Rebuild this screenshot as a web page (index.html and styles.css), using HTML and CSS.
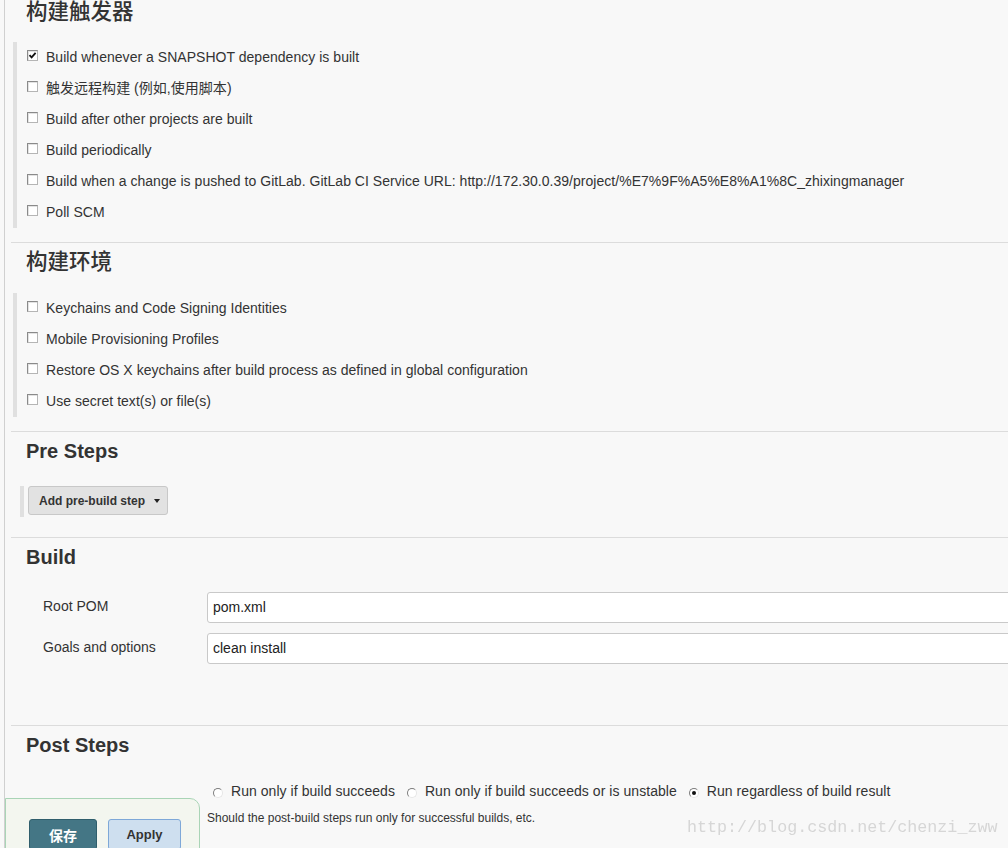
FILE: index.html
```html
<!DOCTYPE html>
<html lang="zh">
<head>
<meta charset="utf-8">
<title>Jenkins config</title>
<link rel="stylesheet" href="styles.css">
</head>
<body>
<div class="page">
  <section class="section first">
    <h2 class="cjk-heading">构建触发器</h2>
    <div class="group">
      <div class="opt"><span class="cb checked"><svg viewBox="0 0 9 9" width="9" height="9"><path d="M1.5 4.2 L3.6 6.4 L7.6 1.8" fill="none" stroke="#111" stroke-width="1.8"/></svg></span><span class="txt">Build whenever a SNAPSHOT dependency is built</span></div>
      <div class="opt"><span class="cb"></span><span class="txt">触发远程构建 (例如,使用脚本)</span></div>
      <div class="opt"><span class="cb"></span><span class="txt">Build after other projects are built</span></div>
      <div class="opt"><span class="cb"></span><span class="txt">Build periodically</span></div>
      <div class="opt"><span class="cb"></span><span class="txt">Build when a change is pushed to GitLab. GitLab CI Service URL: http://172.30.0.39/project/%E7%9F%A5%E8%A1%8C_zhixingmanager</span></div>
      <div class="opt"><span class="cb"></span><span class="txt">Poll SCM</span></div>
    </div>
  </section>

  <section class="section env">
    <h2 class="cjk-heading">构建环境</h2>
    <div class="group">
      <div class="opt"><span class="cb"></span><span class="txt">Keychains and Code Signing Identities</span></div>
      <div class="opt"><span class="cb"></span><span class="txt">Mobile Provisioning Profiles</span></div>
      <div class="opt"><span class="cb"></span><span class="txt">Restore OS X keychains after build process as defined in global configuration</span></div>
      <div class="opt"><span class="cb"></span><span class="txt">Use secret text(s) or file(s)</span></div>
    </div>
  </section>

  <section class="section pre">
    <h2 class="heading">Pre Steps</h2>
    <div class="btn-group">
      <button class="dropdown-btn">Add pre-build step <span class="caret"></span></button>
    </div>
  </section>

  <section class="section build">
    <h2 class="heading">Build</h2>
    <div class="form-row">
      <label class="label">Root POM</label>
      <div class="input">pom.xml</div>
    </div>
    <div class="form-row">
      <label class="label">Goals and options</label>
      <div class="input">clean install</div>
    </div>
  </section>

  <section class="section post">
    <h2 class="heading">Post Steps</h2>
    <div class="form-row radio-row">
      <span class="label"></span>
      <div class="radios">
        <span class="radio-item"><span class="radio"></span>Run only if build succeeds</span>
        <span class="radio-item"><span class="radio"></span>Run only if build succeeds or is unstable</span>
        <span class="radio-item"><span class="radio on"></span>Run regardless of build result</span>
      </div>
    </div>
    <div class="form-row">
      <span class="label"></span>
      <div class="help">Should the post-build steps run only for successful builds, etc.</div>
    </div>
  </section>
</div>

<div class="bottom-bar">
  <button class="btn-save">保存</button>
  <button class="btn-apply">Apply</button>
</div>

<div class="watermark">http://blog.csdn.net/chenzi_zww</div>
</body>
</html>
```

FILE: styles.css
```css
html, body {
  margin: 0;
  padding: 0;
  overflow: hidden;
  background: #f8f8f8;
}

body {
  font-family: "Liberation Sans", Arial, "Noto Sans CJK SC", sans-serif;
  font-size: 14px;
  color: #333;
  height: 848px;
}

.page {
  margin-left: 4px;
  border-left: 1px solid #d0d0d0;
  width: 1060px;
  min-height: 848px;
}

.section {
  margin-left: 6px;
  border-top: 1px solid #dcdcdc;
  padding-top: 7px;
}

.section.first {
  border-top: none;
  padding-top: 0;
  padding-bottom: 14px;
}

.section.env {
  padding-bottom: 14px;
}

.cjk-heading {
  margin: 0;
  padding-left: 15px;
  font-family: "Noto Sans CJK SC", sans-serif;
  font-size: 21.5px;
  font-weight: 500;
  line-height: 20px;
  height: 24px;
  color: #333;
}

.heading {
  margin: 0;
  padding-left: 15px;
  font-family: "Liberation Sans", Arial, sans-serif;
  font-size: 20px;
  font-weight: bold;
  line-height: 24px;
  color: #333;
}

.group {
  margin-top: 18px;
  margin-left: 2px;
  border-left: 4px solid #e0e0e0;
  padding-left: 10px;
}

.section.env .group {
  margin-top: 19px;
}

.opt {
  height: 31px;
  display: flex;
  align-items: center;
  gap: 8px;
  white-space: nowrap;
}

.txt {
  line-height: 16px;
  letter-spacing: 0.03px;
  position: relative;
  top: -1px;
}

.cb {
  width: 9px;
  height: 9px;
  border: 1px solid #8a8a8a;
  border-right-color: #b5b5b5;
  border-bottom-color: #b5b5b5;
  background: #fff;
  box-shadow: inset 1px 1px 0 #e3e3e3;
  flex: none;
  margin-bottom: 5px;
  display: flex;
  align-items: center;
  justify-content: center;
}

.cb svg {
  display: block;
}

.pre .btn-group {
  margin-top: 23px;
  margin-left: 9px;
  border-left: 4px solid #e0e0e0;
  padding-left: 4px;
  height: 31px;
  margin-bottom: 20px;
}

.dropdown-btn {
  height: 29px;
  width: 140px;
  padding: 0 0 0 10px;
  border: 1px solid #c8c8c8;
  border-radius: 3px;
  background: #e2e2e2;
  font-family: "Liberation Sans", Arial, sans-serif;
  font-size: 12px;
  font-weight: bold;
  color: #333;
  display: flex;
  align-items: center;
  gap: 9px;
  cursor: pointer;
}

.caret {
  width: 0;
  height: 0;
  border-left: 3.5px solid transparent;
  border-right: 3.5px solid transparent;
  border-top: 4px solid #222;
}

.build .form-row:first-of-type {
  margin-top: 23px;
}

.form-row {
  display: grid;
  grid-template-columns: 164px 1fr;
  padding-left: 32px;
}

.build .form-row + .form-row {
  margin-top: 10px;
}

.build {
  padding-bottom: 61px;
}

.label {
  font-size: 14px;
  line-height: 18px;
  padding-top: 5px;
  color: #333;
}

.input {
  height: 29px;
  border: 1px solid #c9c9c9;
  border-radius: 3px;
  background: #fff;
  padding-left: 5px;
  line-height: 29px;
  font-size: 14px;
  color: #222;
}

.radio-row {
  margin-top: 25px;
}

.radio-row .label,
.post .label {
  padding-top: 0;
}

.radios {
  display: flex;
  align-items: center;
  white-space: nowrap;
  line-height: 18px;
  padding-left: 6px;
  letter-spacing: 0.05px;
}

.radio-item {
  display: inline-flex;
  align-items: center;
  gap: 8px;
  margin-right: 12px;
}

.radio {
  width: 8px;
  height: 8px;
  border-radius: 50%;
  border: 1px solid;
  border-color: #7d7d7d #e6e6e6 #e6e6e6 #7d7d7d;
  background: #fff;
  position: relative;
  top: 2px;
  flex: none;
}

.radio.on::after {
  content: "";
  position: absolute;
  left: 2px;
  top: 2px;
  width: 4px;
  height: 4px;
  border-radius: 50%;
  background: #111;
}

.help {
  margin-top: 10px;
  font-size: 12px;
  line-height: 16px;
  color: #333;
}

.bottom-bar {
  position: fixed;
  left: 5px;
  top: 798px;
  width: 195px;
  height: 60px;
  box-sizing: border-box;
  background: #f3f6ef;
  border: 1px solid #a9d4b6;
  border-top-right-radius: 10px;
  padding: 20px 0 0 23px;
  display: flex;
  gap: 11px;
  align-items: flex-start;
}

.btn-save {
  width: 68px;
  height: 31px;
  background: #447685;
  border: 1px solid #2f5e6c;
  border-radius: 3px;
  color: #fff;
  font-family: "Noto Sans CJK SC", sans-serif;
  font-size: 14px;
  font-weight: bold;
  padding: 0;
}

.btn-apply {
  width: 73px;
  height: 31px;
  background: #cedfef;
  border: 1px solid #7ea8d8;
  border-radius: 3px;
  color: #333;
  font-family: "Liberation Sans", Arial, sans-serif;
  font-size: 13px;
  font-weight: bold;
  padding: 0;
}

.watermark {
  position: fixed;
  left: 687px;
  top: 817px;
  font-family: "Liberation Mono", "Courier New", monospace;
  font-size: 16.7px;
  line-height: 22px;
  color: #d6d6d6;
  white-space: nowrap;
}
```
